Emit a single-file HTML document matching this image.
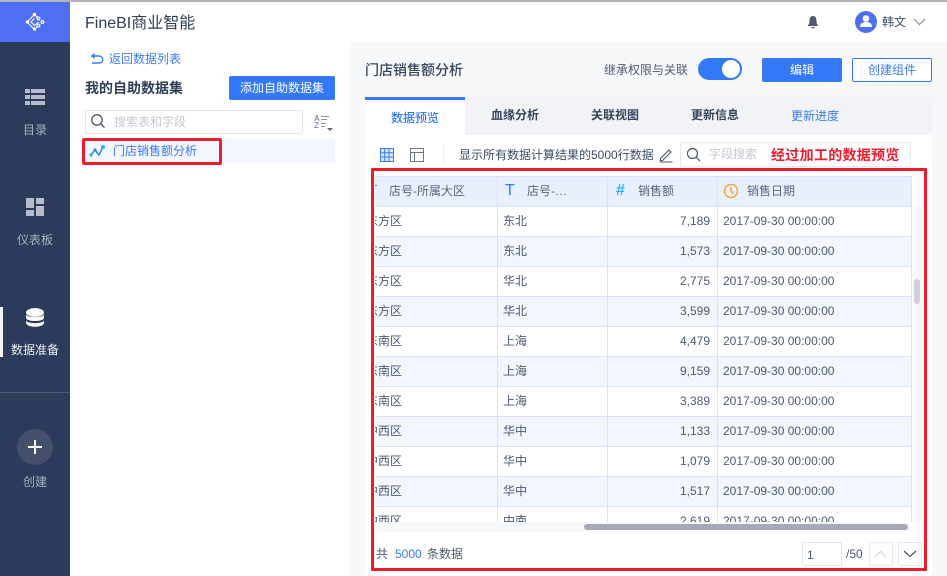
<!DOCTYPE html>
<html lang="zh"><head><meta charset="utf-8"><style>
html,body{margin:0;padding:0;width:947px;height:576px;overflow:hidden;background:#fff}
body{position:relative;font-family:"Liberation Sans","Noto Sans CJK SC",sans-serif;font-size:12px;color:#3d4d66}
.a{position:absolute;white-space:nowrap}
.t{position:absolute;white-space:nowrap;line-height:16px}
.row{position:absolute;left:375px;width:536px;height:29px;border-bottom:1px solid #d5e3fb}
.c{position:absolute;top:0;line-height:29px;color:#4d5a70;white-space:nowrap}
.v{position:absolute;top:0;width:1px;background:#d5e3fb}
</style></head><body>
<div class="a" style="left:0;top:0;width:947px;height:2px;background:#b5b5b9"></div>
<div class="a" style="left:0;top:2px;width:70px;height:40px;background:#4f6ff2"></div>
<div class="a" style="left:0;top:42px;width:70px;height:534px;background:#2b3b59"></div>
<svg class="a" style="left:24px;top:11px" width="22" height="22" viewBox="0 0 22 22" fill="none" stroke="#fff" stroke-width="1.100"><path d="M10.500 3.500 3 11l7.500 7.500M10.500 3.500l3.500 3.500M10.500 18.500l3.500-3.500M10.500 7.500 7 11l3.500 3.500 4-3.500"/><circle cx="10.500" cy="3.500" r="1.700" fill="#fff" stroke="none"/><circle cx="3.500" cy="11" r="1.800" fill="#fff" stroke="none"/><circle cx="10.500" cy="18" r="1.700" fill="#fff" stroke="none"/><circle cx="14.500" cy="7.500" r="1.400"/><circle cx="18.500" cy="11" r="1.400"/><circle cx="14.500" cy="14.500" r="1.400"/></svg>
<svg class="a" style="left:25px;top:88px" width="20" height="18" fill="#b6bccb"><rect width="5" height="4" y="1"/><rect x="6" width="14" height="4" y="1"/><rect width="5" height="4" y="7"/><rect x="6" width="14" height="4" y="7"/><rect width="5" height="4" y="13"/><rect x="6" width="14" height="4" y="13"/></svg>
<div class="t" style="left:23px;top:122px;color:#a9b0bf">目录</div>
<svg class="a" style="left:26px;top:198px" width="18" height="18" fill="#b6bccb"><rect width="8" height="10"/><rect x="10" width="8" height="6"/><rect y="12" width="8" height="6"/><rect x="10" y="8" width="8" height="10"/></svg>
<div class="t" style="left:17px;top:232px;color:#a9b0bf">仪表板</div>
<div class="a" style="left:0;top:307px;width:3px;height:50px;background:#f2f3f6"></div>
<svg class="a" style="left:26px;top:308px" width="18" height="20" fill="#fff"><ellipse cx="9" cy="4.500" rx="9" ry="4.500"/><path d="M0 6.500C1 10 17 10 18 6.500V10C17 14 1 14 0 10zM0 12.500C1 16 17 16 18 12.500V15C17 20 1 20 0 15z"/></svg>
<div class="t" style="left:11px;top:342px;color:#eef0f4">数据准备</div>
<div class="a" style="left:0;top:392px;width:70px;height:1px;background:#4e5b76"></div>
<div class="a" style="left:17px;top:429px;width:36px;height:36px;border-radius:50%;background:#434f6b"></div>
<svg class="a" style="left:28px;top:440px" width="14" height="14" fill="#fff"><rect x="6" width="2" height="14"/><rect y="6" width="14" height="2"/></svg>
<div class="t" style="left:23px;top:474px;color:#a9b0bf">创建</div>

<div class="t" style="left:85px;top:14px;font-size:16px;line-height:20px;color:#2f3e56">FineBI商业智能</div>
<svg class="a" style="left:806px;top:15px" width="14" height="15" fill="#4e5b70"><path d="M7 1C4 1 3.500 4 3.500 6 3.500 9 2 10 2 11h10c0-1-1.500-2-1.500-5C10.500 4 10 1 7 1z"/><rect x="5.500" y="12" width="3" height="1.200"/></svg>
<div class="a" style="left:855px;top:11px;width:22px;height:22px;border-radius:50%;background:#4f6ff2"></div>
<svg class="a" style="left:860px;top:15px" width="12" height="13" fill="#fff"><circle cx="6" cy="3.500" r="3.300"/><path d="M0 12c0-4 3-5 6-5s6 1 6 5z"/></svg>
<div class="t" style="left:882px;top:14px;color:#3d4d66">韩文</div>
<svg class="a" style="left:913px;top:18px" width="13" height="8" fill="none" stroke="#7d8896"><path d="M1 1l5.500 5.500L12 1"/></svg>

<svg class="a" style="left:90px;top:52px" width="14" height="13" fill="none" stroke="#3a7bf2" stroke-width="1.400"><path d="M1 4h8c5 0 5 7 0 7H2"/><path d="M4.500 .8 1 4l3.500 3" fill="#3a7bf2" stroke="none"/></svg>
<div class="t" style="left:109px;top:51px;color:#3a7bf2">返回数据列表</div>
<div class="t" style="left:85px;top:80px;font-size:14px;font-weight:bold;color:#2f3e56">我的自助数据集</div>
<div class="a" style="left:229px;top:76px;width:106px;height:24px;border-radius:2px;background:#3378f6;color:#fff;text-align:center;line-height:24px">添加自助数据集</div>
<div class="a" style="left:85px;top:110px;width:216px;height:22px;border:1px solid #e2e5ea;border-radius:2px"></div>
<svg class="a" style="left:90px;top:113px" width="16" height="16" fill="none" stroke="#4a5668" stroke-width="1.300"><circle cx="7" cy="7" r="5.200"/><path d="M11 11l3.500 3.500"/></svg>
<div class="t" style="left:114px;top:114px;color:#c3c8d0">搜索表和字段</div>
<div class="t" style="left:314px;top:115px;font-size:8px;line-height:7px;font-weight:bold;color:#8a93a3;white-space:normal;width:8px">A<br>Z</div>
<svg class="a" style="left:320px;top:114px" width="14" height="18" fill="#8a93a3"><rect x="1" y="2" width="8" height="1"/><rect x="1" y="5" width="6" height="1"/><rect x="1" y="9" width="5" height="1"/><rect x="1" y="12" width="4" height="1"/><path d="M7 14h6l-3 3z" fill="#5b6678"/></svg>
<div class="a" style="left:85px;top:139px;width:250px;height:24px;background:#f3f6fd"></div>
<svg class="a" style="left:89px;top:144px" width="16" height="15" fill="none" stroke="#2b86f0" stroke-width="1.500"><path d="M2 11 6 6l4 5 4-8"/><circle cx="2" cy="11" r="1.600" fill="#2bb5f0" stroke="none"/><circle cx="6" cy="6" r="1.600" fill="#2b86f0" stroke="none"/><circle cx="14" cy="3" r="2" fill="#2bb5f0" stroke="none"/></svg>
<div class="t" style="left:113px;top:143px;color:#3a7bf2">门店销售额分析</div>
<div class="a" style="left:82px;top:138px;width:134px;height:21px;border:3px solid #ec1c2c;border-radius:2px"></div>

<div class="a" style="left:350px;top:42px;width:597px;height:534px;background:#f7f8fa"></div>
<div class="t" style="left:365px;top:62px;font-size:14px;color:#36445a;font-weight:500">门店销售额分析</div>
<div class="t" style="left:604px;top:62px;color:#4d5a70">继承权限与关联</div>
<div class="a" style="left:698px;top:58px;width:44px;height:22px;border-radius:11px;background:#3378f6"></div>
<div class="a" style="left:722px;top:60px;width:18px;height:18px;border-radius:50%;background:#fff"></div>
<div class="a" style="left:762px;top:58px;width:80px;height:24px;border-radius:2px;background:#3378f6;color:#fff;text-align:center;line-height:24px">编辑</div>
<div class="a" style="left:852px;top:58px;width:78px;height:22px;border:1px solid #3378f6;border-radius:2px;background:#fff;color:#3a7bf2;text-align:center;line-height:22px">创建组件</div>

<div class="a" style="left:365px;top:97px;width:567px;height:38px;background:#f2f3f7"></div>
<div class="a" style="left:365px;top:97px;width:100px;height:38px;background:#fff"></div>
<div class="a" style="left:365px;top:97px;width:100px;height:3px;background:#3378f6"></div>
<div class="a" style="left:365px;top:135px;width:567px;height:441px;background:#fff"></div>
<div class="t" style="left:391px;top:110px;color:#3378f6;font-weight:500">数据预览</div>
<div class="t" style="left:491px;top:107px;color:#36445a;font-weight:bold">血缘分析</div>
<div class="t" style="left:591px;top:107px;color:#36445a;font-weight:bold">关联视图</div>
<div class="t" style="left:691px;top:107px;color:#36445a;font-weight:bold">更新信息</div>
<div class="t" style="left:791px;top:108px;color:#3a7bf2">更新进度</div>

<svg class="a" style="left:380px;top:148px" width="14" height="14" fill="#dce8fc" stroke="#3a7bf2"><rect x=".5" y=".5" width="13" height="13"/><path d="M.5 4.700h13M.5 9h13M4.700 .5v13M9 .5v13"/></svg>
<svg class="a" style="left:410px;top:148px" width="14" height="14" fill="none" stroke="#6b7688"><rect x=".5" y=".5" width="13" height="13"/><path d="M.5 4.500h13M4.500 4.500v9"/></svg>
<div class="a" style="left:443px;top:145px;width:1px;height:20px;background:#eceef2"></div>
<div class="t" style="left:459px;top:147px;color:#3d4d66">显示所有数据计算结果的5000行数据</div>
<svg class="a" style="left:659px;top:148px" width="14" height="15" fill="none" stroke="#4a5668" stroke-width="1.100"><path d="M1.500 10.500 10 2l2 2-8.500 8.500H1.500zM.5 14h13"/></svg>
<div class="a" style="left:680px;top:142px;width:229px;height:23px;border:1px solid #e8eaee;border-radius:2px"></div>
<svg class="a" style="left:686px;top:147px" width="15" height="15" fill="none" stroke="#4a5668" stroke-width="1.200"><circle cx="6.500" cy="6.500" r="5"/><path d="M10 10l4 4"/></svg>
<div class="t" style="left:709px;top:146px;color:#c3c8d0">字段搜索</div>
<div class="t" style="left:771px;top:147px;font-size:14px;letter-spacing:.3px;font-weight:bold;color:#ec1c2c">经过加工的数据预览</div>

<div class="a" style="left:375px;top:176px;width:536px;height:29px;background:#e8f0fd;border-top:1px solid #d5e3fb;border-bottom:1px solid #d5e3fb;overflow:hidden"></div>
<div class="a" style="left:375px;top:206px;width:536px;height:1px;background:#d5e3fb"></div>
<div class="t" style="left:389px;top:183px;color:#5a6678">店号-所属大区</div>
<div class="a" style="left:375px;top:185px;width:2px;height:1px;background:#3378f6"></div>
<div class="t" style="left:505px;top:183px;color:#3378f6;font-size:16px">T</div>
<div class="t" style="left:527px;top:183px;color:#5a6678">店号-…</div>
<div class="t" style="left:616px;top:183px;color:#2bb5f0;font-size:16px;font-weight:bold">#</div>
<div class="t" style="left:638px;top:183px;color:#5a6678">销售额</div>
<svg class="a" style="left:723px;top:183px" width="16" height="16" fill="none" stroke="#f5a63a" stroke-width="1.500"><circle cx="8" cy="8" r="6.500"/><path d="M8 4v4l2.500 3"/></svg>
<div class="t" style="left:747px;top:183px;color:#5a6678">销售日期</div>

<div class="a" style="left:375px;top:207px;width:536px;height:315px;overflow:hidden">
<div class="a" style="left:0;top:30px;width:536px;height:29px;background:#f3f6fd"></div>
<div class="a" style="left:0;top:90px;width:536px;height:29px;background:#f3f6fd"></div>
<div class="a" style="left:0;top:150px;width:536px;height:29px;background:#f3f6fd"></div>
<div class="a" style="left:0;top:210px;width:536px;height:29px;background:#f3f6fd"></div>
<div class="a" style="left:0;top:270px;width:536px;height:29px;background:#f3f6fd"></div>
<div class="row" style="left:0;top:0"><span class="c" style="left:-9px">东方区</span><span class="c" style="left:128px">东北</span><span class="c" style="left:300px;width:35px;text-align:right">7,189</span><span class="c" style="left:348px">2017-09-30 00:00:00</span></div>
<div class="row" style="left:0;top:30px"><span class="c" style="left:-9px">东方区</span><span class="c" style="left:128px">东北</span><span class="c" style="left:300px;width:35px;text-align:right">1,573</span><span class="c" style="left:348px">2017-09-30 00:00:00</span></div>
<div class="row" style="left:0;top:60px"><span class="c" style="left:-9px">东方区</span><span class="c" style="left:128px">华北</span><span class="c" style="left:300px;width:35px;text-align:right">2,775</span><span class="c" style="left:348px">2017-09-30 00:00:00</span></div>
<div class="row" style="left:0;top:90px"><span class="c" style="left:-9px">东方区</span><span class="c" style="left:128px">华北</span><span class="c" style="left:300px;width:35px;text-align:right">3,599</span><span class="c" style="left:348px">2017-09-30 00:00:00</span></div>
<div class="row" style="left:0;top:120px"><span class="c" style="left:-9px">东南区</span><span class="c" style="left:128px">上海</span><span class="c" style="left:300px;width:35px;text-align:right">4,479</span><span class="c" style="left:348px">2017-09-30 00:00:00</span></div>
<div class="row" style="left:0;top:150px"><span class="c" style="left:-9px">东南区</span><span class="c" style="left:128px">上海</span><span class="c" style="left:300px;width:35px;text-align:right">9,159</span><span class="c" style="left:348px">2017-09-30 00:00:00</span></div>
<div class="row" style="left:0;top:180px"><span class="c" style="left:-9px">东南区</span><span class="c" style="left:128px">上海</span><span class="c" style="left:300px;width:35px;text-align:right">3,389</span><span class="c" style="left:348px">2017-09-30 00:00:00</span></div>
<div class="row" style="left:0;top:210px"><span class="c" style="left:-9px">中西区</span><span class="c" style="left:128px">华中</span><span class="c" style="left:300px;width:35px;text-align:right">1,133</span><span class="c" style="left:348px">2017-09-30 00:00:00</span></div>
<div class="row" style="left:0;top:240px"><span class="c" style="left:-9px">中西区</span><span class="c" style="left:128px">华中</span><span class="c" style="left:300px;width:35px;text-align:right">1,079</span><span class="c" style="left:348px">2017-09-30 00:00:00</span></div>
<div class="row" style="left:0;top:270px"><span class="c" style="left:-9px">中西区</span><span class="c" style="left:128px">华中</span><span class="c" style="left:300px;width:35px;text-align:right">1,517</span><span class="c" style="left:348px">2017-09-30 00:00:00</span></div>
<div class="row" style="left:0;top:300px"><span class="c" style="left:-9px">中西区</span><span class="c" style="left:128px">中南</span><span class="c" style="left:300px;width:35px;text-align:right">2,619</span><span class="c" style="left:348px">2017-09-30 00:00:00</span></div>
</div>
<div class="a v" style="left:497px;top:176px;height:346px"></div>
<div class="a v" style="left:607px;top:176px;height:346px"></div>
<div class="a v" style="left:717px;top:176px;height:346px"></div>
<div class="a v" style="left:911px;top:176px;height:346px"></div>

<div class="a" style="left:913px;top:205px;width:9px;height:318px;background:#f7f8fa;border-radius:4px"></div>
<div class="a" style="left:914px;top:279px;width:6px;height:25px;background:#cfd2db;border-radius:3px"></div>
<div class="a" style="left:375px;top:522px;width:537px;height:10px;background:#f7f8fa;border-radius:5px"></div>
<div class="a" style="left:584px;top:524px;width:324px;height:6px;background:#a7a9b6;border-radius:3px"></div>

<div class="t" style="left:376px;top:546px;color:#4d5a70">共</div>
<div class="t" style="left:395px;top:546px;color:#3378f6">5000</div>
<div class="t" style="left:427px;top:546px;color:#4d5a70">条数据</div>
<div class="a" style="left:802px;top:542px;width:38px;height:22px;border:1px solid #e4e6ea;line-height:24px;text-indent:4px;color:#4d5a70">1</div>
<div class="t" style="left:846px;top:546px;color:#4d5a70">/50</div>
<div class="a" style="left:869px;top:542px;width:22px;height:22px;border:1px solid #e8eaee"></div>
<svg class="a" style="left:874px;top:550px" width="13" height="8" fill="none" stroke="#d0d4da" stroke-width="1.200"><path d="M1 7l5.500-5.500L12 7"/></svg>
<div class="a" style="left:898px;top:542px;width:22px;height:22px;border:1px solid #e4e6ea"></div>
<svg class="a" style="left:903px;top:550px" width="14" height="8" fill="none" stroke="#4a5668" stroke-width="1.200"><path d="M1 1l6 5.500L13 1"/></svg>

<div class="a" style="left:371px;top:168px;width:550px;height:397px;border:3px solid #ec1c2c;border-radius:1px"></div>
</body></html>
